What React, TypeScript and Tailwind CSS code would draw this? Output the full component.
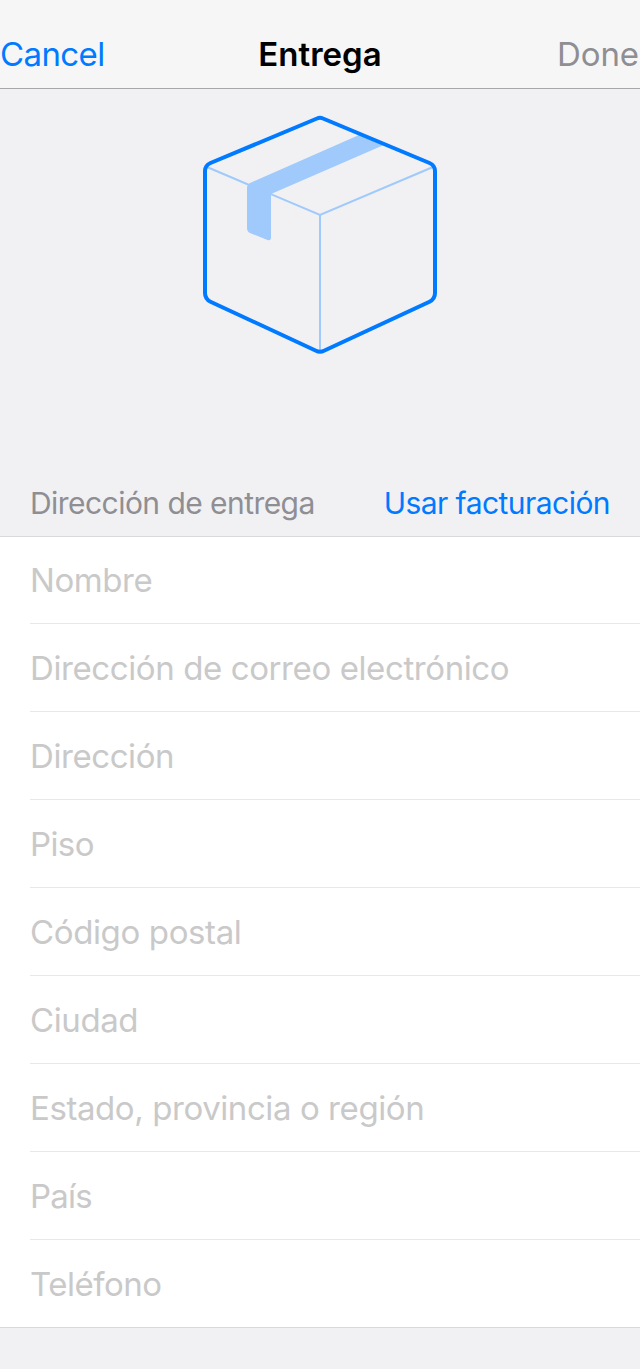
const fields = [
  { label: "Nombre", tracking: "tracking-[-0.45px]" },
  { label: "Dirección de correo electrónico", tracking: "tracking-[-0.4px]" },
  { label: "Dirección", tracking: "tracking-[-0.42px]" },
  { label: "Piso", tracking: "tracking-[-0.6px]" },
  { label: "Código postal", tracking: "tracking-[-0.37px]" },
  { label: "Ciudad", tracking: "tracking-[-0.4px]" },
  { label: "Estado, provincia o región", tracking: "tracking-[-0.42px]" },
  { label: "País", tracking: "tracking-[-0.8px]" },
  { label: "Teléfono", tracking: "tracking-[-0.5px]" },
];

function BoxIllustration() {
  return (
    <svg width="240" height="240" viewBox="200 114 240 240" fill="none" aria-hidden="true">
      <path d="M207 167L320 215L433 167M320 215V351" stroke="#9fcafb" strokeWidth="2" />
      <path
        d="M359 135L250 183Q247 184.500 247 188V228Q247 231.500 250 233L267.500 240Q271 241 271 237.500V194L385 144.500Z"
        fill="#9fcafb"
      />
      <path
        d="M317 118.500Q320 117.200 323 118.500L429.500 163Q435 165.500 435 171V293Q435 299 429.500 301.700L324 350.700Q320 352.700 316 350.700L210.500 301.700Q205 299 205 293V171Q205 165.500 210.500 163Z"
        stroke="#007aff"
        strokeWidth="4"
      />
    </svg>
  );
}

export default function App() {
  return (
    <div className="flex h-[1369px] w-[640px] flex-col overflow-hidden bg-[#f1f1f4] font-['Inter',sans-serif]">
      <header className="grid h-[89px] shrink-0 grid-cols-3 items-end border-b border-[#a7a7aa] bg-[#f6f6f6] pb-[14px] text-[33px] leading-[40px] whitespace-nowrap">
        <button className="text-left tracking-[-0.6px] text-[#007aff]">Cancel</button>
        <h1 className="text-center font-semibold tracking-[0px] text-black">Entrega</h1>
        <button className="pr-px text-right tracking-[-0.1px] text-[#8e8e93]">Done</button>
      </header>
      <div className="flex h-[375px] shrink-0 justify-center pt-[25px]">
        <BoxIllustration />
      </div>
      <div className="flex h-[72px] shrink-0 items-end justify-between px-[30px] pb-[13px] text-[30px] leading-[40px] whitespace-nowrap">
        <h2 className="tracking-[-0.55px] text-[#8e8e93]">Dirección de entrega</h2>
        <button className="tracking-[-0.55px] text-[#007aff]">Usar facturación</button>
      </div>
      <ul className="h-[792px] shrink-0 border-y border-[#d9d9dc] bg-white">
        {fields.map(({ label, tracking }, i) => (
          <li
            key={label}
            className={`ml-[30px] flex items-center border-[#e8e8ea] text-[33px] leading-[40px] whitespace-nowrap text-[#c9c9c9] ${i === 0 ? "h-[87px]" : "h-[88px]"} ${i === fields.length - 1 ? "" : "border-b"}`}
          >
            <span className={tracking}>{label}</span>
          </li>
        ))}
      </ul>
    </div>
  );
}
